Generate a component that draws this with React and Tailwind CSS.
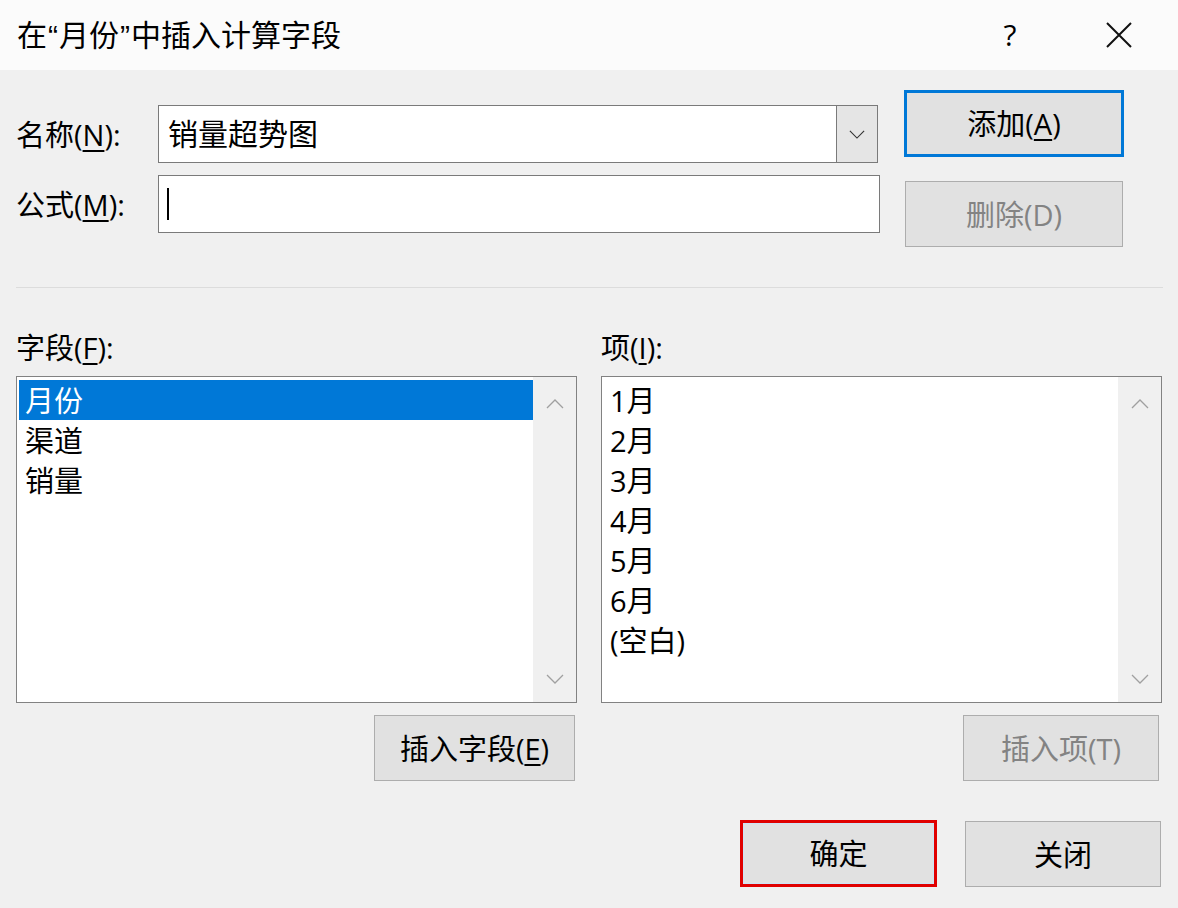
import React from "react";

const font = { fontFamily: "'Open Sans', 'Noto Sans CJK SC', sans-serif" };

function Chevron({ up, className }) {
  return (
    <svg width="18" height="10" viewBox="0 0 18 10" className={className}>
      <path
        d={up ? "M1 9 L9 1 L17 9" : "M1 1 L9 9 L17 1"}
        fill="none"
        stroke="currentColor"
        strokeWidth="1.3"
      />
    </svg>
  );
}

function ListBox({ items, selected }) {
  return (
    <div className="flex h-[327px] border border-[#828282] bg-white">
      <div className="flex-1 pl-[2px] pt-[3px]">
        {items.map((it, i) => (
          <div
            key={it}
            className={
              "flex h-[40px] items-center pl-[6px] text-[29px] leading-none " +
              (i === selected ? "bg-[#0078d7] text-white" : "text-black")
            }
          >
            {it}
          </div>
        ))}
      </div>
      <div className="flex w-[43px] flex-col items-center justify-between bg-[#f0f0f0] pb-[18px] pt-[22px] text-[#a0a0a0]">
        <Chevron up />
        <Chevron />
      </div>
    </div>
  );
}

function Button({ children, disabled, border = "border border-[#adadad]", className = "" }) {
  return (
    <div
      className={
        "flex items-center justify-center bg-[#e1e1e1] text-[29px] leading-none " +
        border +
        (disabled ? " text-[#838383] " : " text-black ") +
        className
      }
    >
      {children}
    </div>
  );
}

export default function App() {
  return (
    <div className="flex h-[908px] w-[1178px] flex-col bg-[#f0f0f0]" style={font}>
      {/* title bar */}
      <div className="flex h-[70px] items-center bg-[#fbfbfb]">
        <div className="pl-[17px] text-[30px] leading-none text-black">
          在<span className="px-[1px] font-['Liberation_Sans']">“</span>月份<span className="px-[1px] font-['Liberation_Sans']">”</span>中插入计算字段
        </div>
        <div className="ml-auto flex items-center">
          <span className="w-[40px] text-center text-[30px] leading-none text-black">?</span>
          <svg width="26" height="26" viewBox="0 0 26 26" className="ml-[76px] mr-[46px]">
            <path d="M1 1 L25 25 M25 1 L1 25" stroke="#111" strokeWidth="2" />
          </svg>
        </div>
      </div>

      {/* top section */}
      <div className="flex px-[16px]">
        <div className="w-[864px]">
          <div className="mt-[35px] flex h-[58px] items-center">
            <div className="w-[142px] text-[29px] leading-none">
              名称(<u className="underline-offset-4">N</u>):
            </div>
            <div className="flex h-[58px] w-[720px] border border-[#7a7a7a] bg-white">
              <div className="flex flex-1 items-center pl-[9px] text-[30px] leading-none">销量超势图</div>
              <div className="flex w-[41px] items-center justify-center border-l border-[#7a7a7a] bg-[#e5e5e5] text-[#333]">
                <Chevron className="h-[9px] w-[16px]" />
              </div>
            </div>
          </div>
          <div className="mt-[12px] flex h-[58px] items-center">
            <div className="w-[142px] text-[29px] leading-none">
              公式(<u className="underline-offset-4">M</u>):
            </div>
            <div className="flex h-[58px] w-[722px] items-center border border-[#7a7a7a] bg-white pl-[8px]">
              <div className="h-[32px] w-[2px] bg-black" />
            </div>
          </div>
        </div>
        <div className="ml-[24px] flex flex-col">
          <Button border="border-[3px] border-[#0078d7]" className="mt-[20px] h-[67px] w-[220px]">
            添加(<u className="underline-offset-4">A</u>)
          </Button>
          <Button disabled className="ml-[1px] mt-[24px] h-[66px] w-[218px]">
            删除(D)
          </Button>
        </div>
      </div>

      {/* separator */}
      <div className="ml-[16px] mt-[40px] h-px w-[1147px] bg-[#dcdcdc]" />

      {/* lists */}
      <div className="mt-[42px] flex gap-[24px] px-[16px]">
        <div className="flex w-[562px] flex-col">
          <div className="h-[36px] text-[29px] leading-[36px]">
            字段(<u className="underline-offset-4">F</u>):
          </div>
          <div className="mt-[10px]">
            <ListBox items={["月份", "渠道", "销量"]} selected={0} />
          </div>
          <Button className="ml-auto mr-[2px] mt-[12px] h-[66px] w-[201px]">
            插入字段(<u className="underline-offset-4">E</u>)
          </Button>
        </div>
        <div className="flex w-[562px] flex-col">
          <div className="h-[36px] text-[29px] leading-[36px]">
            项(<u className="underline-offset-4">I</u>):
          </div>
          <div className="mt-[10px]">
            <ListBox items={["1月", "2月", "3月", "4月", "5月", "6月", "(空白)"]} selected={-1} />
          </div>
          <Button disabled className="ml-auto mr-[3px] mt-[12px] h-[66px] w-[196px]">
            插入项(T)
          </Button>
        </div>
      </div>

      {/* bottom buttons */}
      <div className="mt-[39px] flex justify-end pr-[17px]">
        <Button
          border="border-[3px] border-[#e00000]"
          className="h-[67px] w-[197px] shadow-[inset_0_0_0_1px_#cce4f7]"
        >
          确定
        </Button>
        <Button className="ml-[28px] mt-[1px] h-[66px] w-[196px]">关闭</Button>
      </div>
    </div>
  );
}
